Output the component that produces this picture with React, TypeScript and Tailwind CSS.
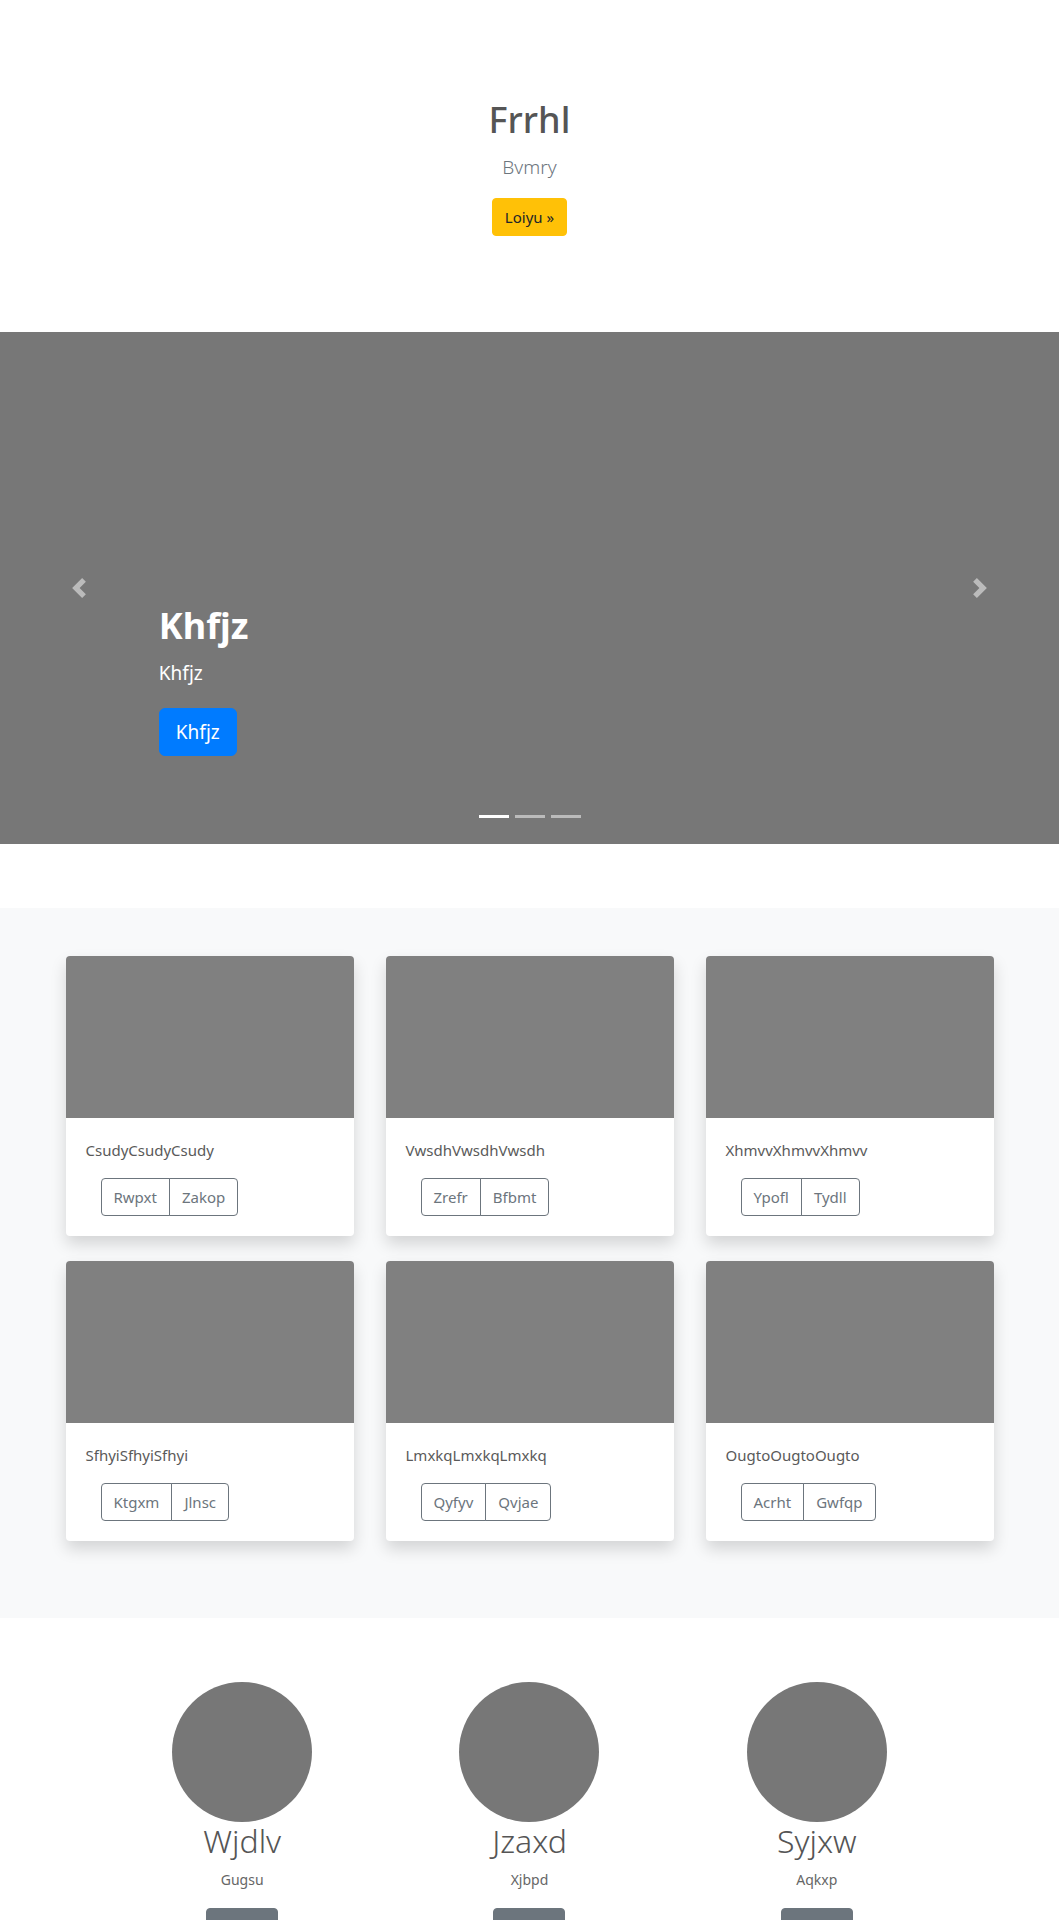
import React from "react";

const cards = [
  { title: "CsudyCsudyCsudy", a: "Rwpxt", b: "Zakop" },
  { title: "VwsdhVwsdhVwsdh", a: "Zrefr", b: "Bfbmt" },
  { title: "XhmvvXhmvvXhmvv", a: "Ypofl", b: "Tydll" },
  { title: "SfhyiSfhyiSfhyi", a: "Ktgxm", b: "Jlnsc" },
  { title: "LmxkqLmxkqLmxkq", a: "Qyfyv", b: "Qvjae" },
  { title: "OugtoOugtoOugto", a: "Acrht", b: "Gwfqp" },
];

const team = [
  { name: "Wjdlv", role: "Gugsu", cta: "Vfmqa" },
  { name: "Jzaxd", role: "Xjbpd", cta: "Vfmqa" },
  { name: "Syjxw", role: "Aqkxp", cta: "Vfmqa" },
];

function Chevron({ dir }: { dir: "left" | "right" }) {
  return (
    <svg width="20" height="20" viewBox="0 0 8 8" className="opacity-50">
      {dir === "left" ? (
        <path fill="#fff" d="M5.25 0l-4 4 4 4 1.5-1.5L4.25 4l2.5-2.5L5.25 0z" />
      ) : (
        <path fill="#fff" d="M2.75 0l-1.5 1.5L3.75 4l-2.5 2.5L2.75 8l4-4-4-4z" />
      )}
    </svg>
  );
}

export default function App() {
  return (
    <div className="min-h-screen bg-white font-['Noto_Sans',sans-serif]">
      {/* hero */}
      <section className="py-24 text-center">
        <h1 className="mb-2 text-[36px] font-medium leading-[48px] text-[#555]">Frrhl</h1>
        <p className="mb-4 text-[19px] font-light leading-[30px] text-[#6c757d]">Bvmry</p>
        <button className="rounded border border-[#ffc107] bg-[#ffc107] px-3 py-1.5 text-[15px] leading-6 text-[#212529]">
          Loiyu »
        </button>
      </section>

      {/* carousel */}
      <section className="relative h-[512px] bg-[#777]">
        <a className="absolute inset-y-0 left-0 flex w-[15%] items-center justify-center">
          <Chevron dir="left" />
        </a>
        <a className="absolute inset-y-0 right-0 flex w-[15%] items-center justify-center">
          <Chevron dir="right" />
        </a>
        <div className="absolute bottom-[88px] left-[15%] right-[15%] text-white">
          <h2 className="mb-2 text-[36px] font-bold leading-[48px]">Khfjz</h2>
          <p className="mb-5 text-[19px] leading-[30px]">Khfjz</p>
          <button className="rounded-md border border-[#007bff] bg-[#007bff] px-4 py-2 text-[19px] leading-[30px] text-white">
            Khfjz
          </button>
        </div>
        <ol className="absolute inset-x-0 bottom-0 mb-4 flex justify-center">
          <li className="mx-[3px] my-[10px] h-[3px] w-[30px] bg-white" />
          <li className="mx-[3px] my-[10px] h-[3px] w-[30px] bg-white opacity-50" />
          <li className="mx-[3px] my-[10px] h-[3px] w-[30px] bg-white opacity-50" />
        </ol>
      </section>

      {/* cards */}
      <section className="mt-16 bg-[#f8f9fa] pb-[52px] pt-12">
        <div className="mx-auto grid w-[960px] grid-cols-3">
          {cards.map((c) => (
            <div key={c.title} className="mb-[25px] px-4">
              <div className="overflow-hidden rounded bg-white shadow-[0_0.5rem_1rem_rgba(0,0,0,0.15)]">
                <div className="h-[162px] bg-[#808080]" />
                <div className="p-5">
                  <p className="mb-4 text-[15px] leading-6 text-[#5a5a5a]">{c.title}</p>
                  <div className="pl-[15px]">
                    <div className="inline-flex">
                      <button className="rounded-l border border-[#6c757d] px-3 py-1.5 text-[15px] leading-6 text-[#6c757d]">
                        {c.a}
                      </button>
                      <button className="-ml-px rounded-r border border-[#6c757d] px-3 py-1.5 text-[15px] leading-6 text-[#6c757d]">
                        {c.b}
                      </button>
                    </div>
                  </div>
                </div>
              </div>
            </div>
          ))}
        </div>
      </section>

      {/* team */}
      <section className="pb-12 pt-16">
        <div className="mx-auto grid w-[862px] grid-cols-3 text-center">
          {team.map((m) => (
            <div key={m.name} className="flex flex-col items-center">
              <div className="h-[140px] w-[140px] rounded-full bg-[#777]" />
              <h3 className="text-[32px] font-light leading-[38px] text-[#555]">{m.name}</h3>
              <p className="mt-[9px] text-[14px] leading-[21px] text-[#666]">{m.role}</p>
              <button className="mt-[18px] w-[72px] rounded border border-[#6c757d] bg-[#6c757d] py-1.5 text-[15px] leading-6 text-white">
                {m.cta}
              </button>
            </div>
          ))}
        </div>
      </section>
    </div>
  );
}
